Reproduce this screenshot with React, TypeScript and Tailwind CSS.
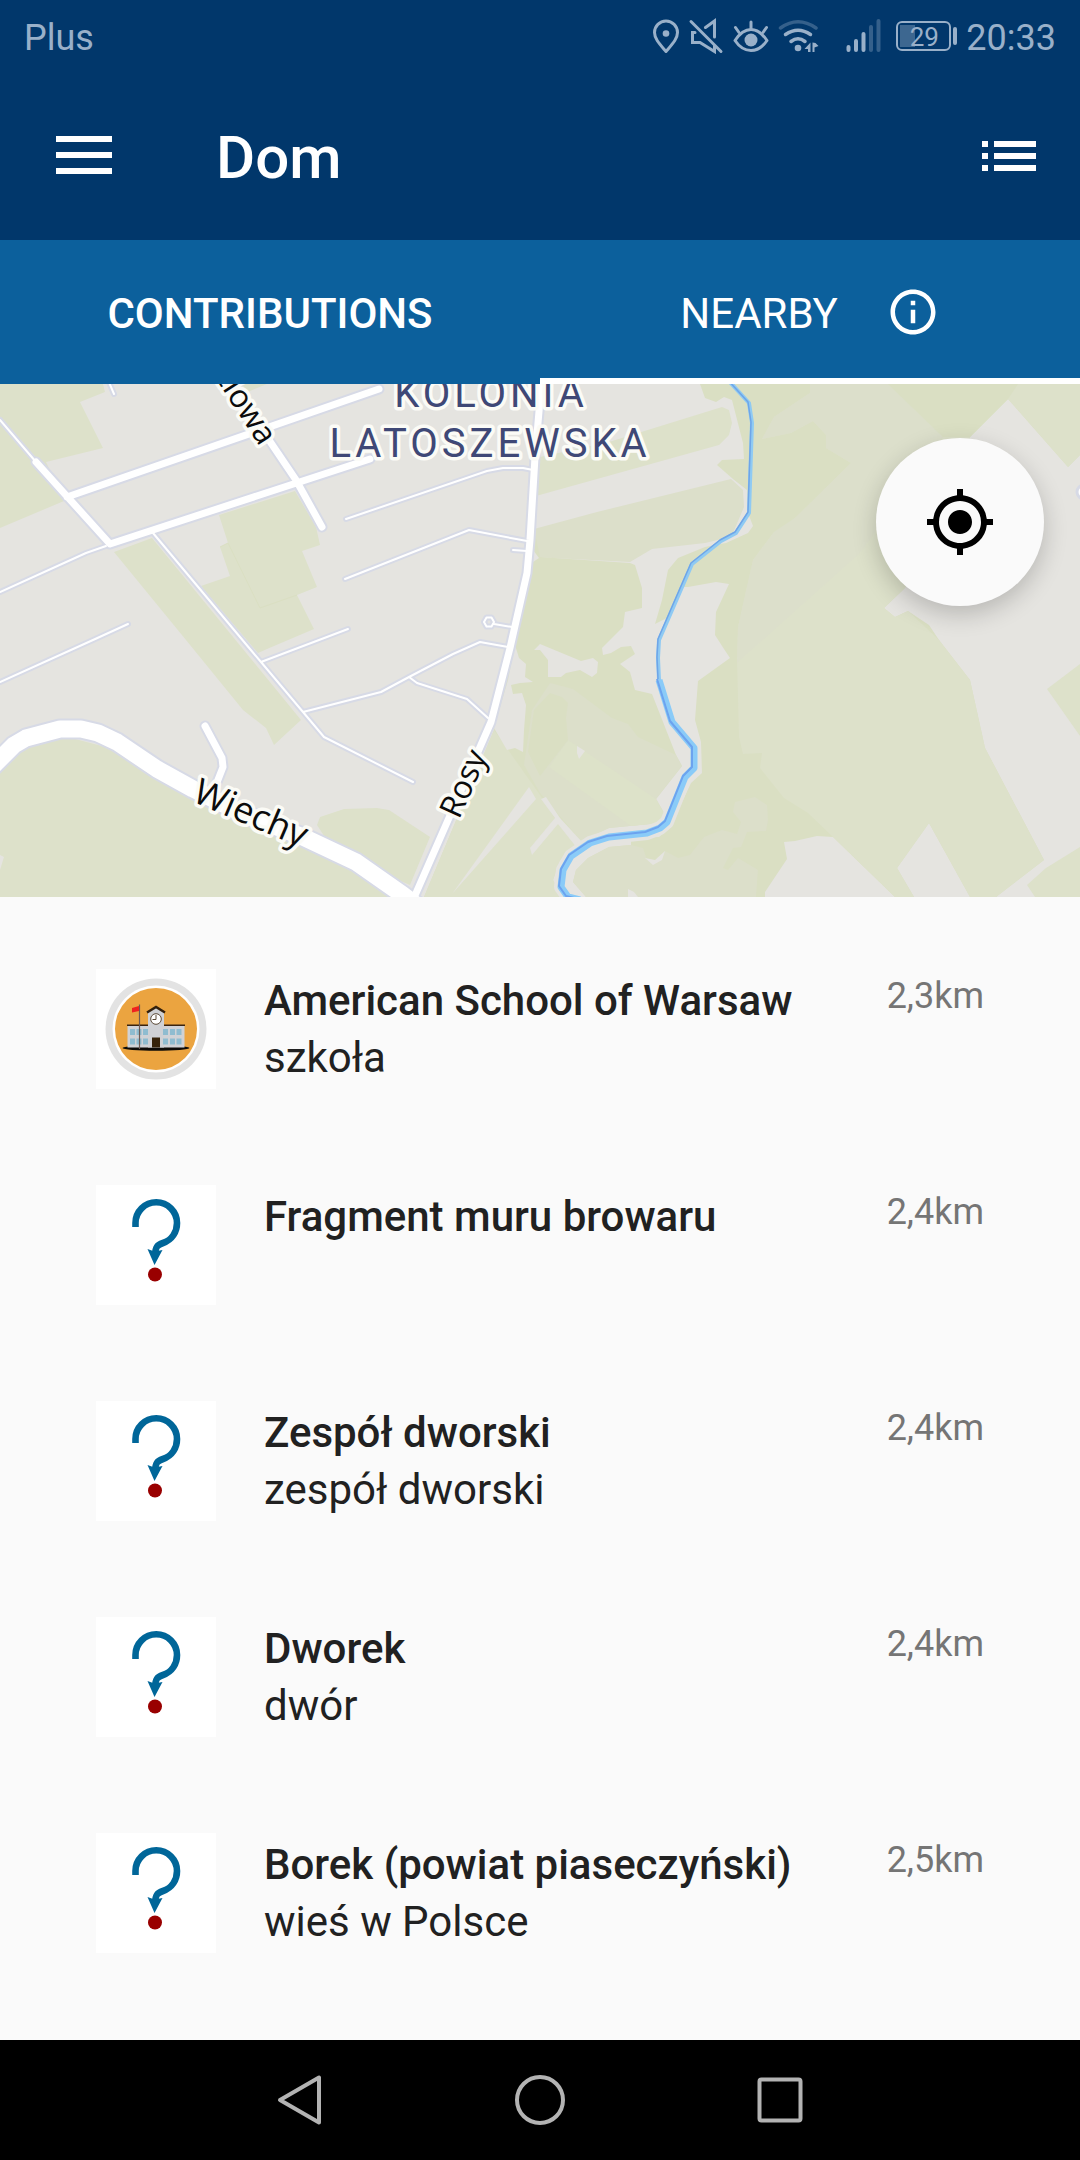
import React from 'react';

type Place = { name: string; kind?: string; distance: string; school?: boolean };

const places: Place[] = [
  { name: 'American School of Warsaw', kind: 'szkoła', distance: '2,3km', school: true },
  { name: 'Fragment muru browaru', distance: '2,4km' },
  { name: 'Zespół dworski', kind: 'zespół dworski', distance: '2,4km' },
  { name: 'Dworek', kind: 'dwór', distance: '2,4km' },
  { name: 'Borek (powiat piaseczyński)', kind: 'wieś w Polsce', distance: '2,5km' },
];

function StatusBar() {
  return (
    <div className="flex h-[72px] items-center justify-between px-6 text-4xl text-[#99b0c9]">
      <span className="pt-1">Plus</span>
      <div className="flex items-center">
        <div className="flex items-center gap-2">
          <svg width="28" height="36" viewBox="651 18 28 36" fill="none" stroke="currentColor" strokeWidth="3">
            <path d="M665 51.500C659 44.500 653.500 39 653.500 32.500a11.500 11.500 0 0 1 23 0C676.500 39 671 44.500 665 51.500Z" strokeLinejoin="round" />
            <circle cx="665" cy="33.500" r="3.300" fill="currentColor" stroke="none" />
          </svg>
          <svg width="36" height="36" viewBox="687 18 36 36" fill="none" stroke="currentColor" strokeWidth="3" strokeLinecap="round">
            <path d="M690 21.500 720 51.500" />
            <path d="M704.500 27.500 713.500 21V37M694 32.500h-2.500v10H699L713.500 51.500V46" />
          </svg>
          <svg width="38" height="36" viewBox="731 18 38 36" fill="none" stroke="currentColor" strokeWidth="3" strokeLinecap="round">
            <path d="M734 40.500C739 33 744 29.500 750 29.500S761 33 766 40.500C761 48 756 50.500 750 50.500S739 48 734 40.500Z" strokeLinejoin="round" />
            <circle cx="750" cy="40" r="6.500" fill="currentColor" stroke="none" />
            <path d="M750 22v6M734.500 27.500l3.500 5M765.500 27.500l-3.500 5" />
          </svg>
          <svg width="42" height="36" viewBox="777 18 42 36" fill="none" stroke="currentColor" strokeWidth="3.500" strokeLinecap="round">
            <path d="M779.500 28Q797 15.500 815 28" opacity=".35" />
            <path d="M784.500 34.500Q797 26 809.500 34.500M790 41.500Q797 36 804 41.500" />
            <circle cx="797" cy="48" r="3.300" fill="currentColor" stroke="none" />
            <path d="M809.500 42.500v9.500h-2.500v-3h-3.500zM811.500 42.500v9.500h2v-4.500l4-1.500-3-3z" fill="currentColor" stroke="none" />
          </svg>
        </div>
        <svg className="ml-6" width="38" height="36" viewBox="843 18 38 36" fill="none" stroke="currentColor" strokeWidth="4" strokeLinecap="round">
          <path d="M847.500 47v3M855 41v9M862.500 34v16" />
          <path d="M870 27v23M877.500 21v29" opacity=".35" />
        </svg>
        <div className="relative ml-3.5 mr-1.5 flex h-[30px] w-[64px] items-center">
          <svg className="absolute inset-0" width="64" height="30" viewBox="0 0 64 30" fill="none">
            <rect x="1" y="1" width="53" height="28" rx="5" stroke="currentColor" strokeWidth="2" />
            <rect x="4" y="4" width="15" height="22" fill="currentColor" opacity=".4" />
            <rect x="57" y="6" width="4" height="18" rx="2" fill="currentColor" />
          </svg>
          <span className="w-14 pt-0.5 text-center text-[26px] leading-none">29</span>
        </div>
        <span className="pt-1">20:33</span>
      </div>
    </div>
  );
}

function MapDrawing() {
  const lanes =
    'M108 380 114 394M0 420 36 462M106 546 86 553 0 592M128 624 93 640 0 682M153 533 250 649 261 662 303 712 324 737 413 782M348 629 261 662M303 712 381 692 409 677 453 654 480 642 508 647M409 677 417 683 467 699 488 718M346 519 487 471 503 468 523 468 533 470M345 579 469 530 527 541M513 550 527 551M512 627 494 624M494 622 491.500 617.500H486.500L484 622 486.500 626.500H491.500Z';
  const streets =
    'M36 462 110 544 370 459M67 497 379 389M218 370 269 440 296 480 322 527M541 375 540 400 535 457 530 540 527 573 510 648 491 722 413 900M205 726 222 758 223 767 214 790';
  const avenue =
    'M-6 765 14 745 26 738 60 729 81 729 98 733 117 742 157 769 193 789 241 813 303 837 356 862 403 895 420 908';
  const riverTop = 'M728 380 749 403 752 423 749 513 736 533 721 541 692 564 659 640 658 658 659 680';
  const riverLow =
    'M659 680 672 722 694 748 694 768 685 777 667 822 660 828 647 833 609 837 590 843 571 856 563 870 561 887 568 897 580 900';
  return (
    <svg
      className="block h-[513px] w-full"
      viewBox="0 384 1080 513"
      preserveAspectRatio="xMidYMid slice"
      role="img"
      aria-label="Map"
    >
      <rect y="384" width="1080" height="513" fill="#e5e4e0" />
      {/* meadows west of the main street */}
      <g fill="#dde1ca">
        <path d="M0 384H103L105 392 80 402 103 448 46 462 64 501 0 528Z" />
        <path d="M243 384H267L245 393Z" />
        <path d="M114 552 152 538 301 720 274 745 266 728 243 710 186 640Z" />
        <path d="M219 515 295 491 316 527 320 545 302 551 317 587 297 595 314 629 267 649 258 653 201 586 230 576 220 547 228 543Z" />
        <path d="M0 755 60 735 117 750 193 795 356 868 400 897H0Z" />
        <path d="M317 825 320 817 344 809 377 808 389 810 430 837 410 885 375 870 330 845Z" />
      </g>
      <path d="M220 547 228 543 260 608 297 595" fill="none" stroke="#dadfc2" />
      <path d="M0 855 4 857 0 870Z" fill="#e5e4e0" />
      {/* fields between the main street and the river */}
      <path d="M540 457 609 442 722 407 729 410 732 423 729 435 719 445 536 496Z" fill="#dde1ca" />
      <path d="M534 529 597 512 731 479 743 490 744 507 733 533 726 538 705 543 652 549 630 562 534 557Z" fill="#dcdfca" />
      <path d="M534 528 540 557 630 563 635 565 642 588 642 608 625 612 623 627 602 648 603 655 611 653 621 647 631 646 635 654 620 664 630 672 635 690 652 694 676 755 682 766 656 799 664 813 660 823 609 828 581 841 560 860 553 880 562 897H424L494 730 515 640 527 575Z" fill="#dadfc3" />
      <path d="M550 683 573 689 612 718 628 724 638 737 676 755 682 766 656 799 664 813 660 823 609 828 581 841 540 793 524 765 532 710Z" fill="#dcdfca" />
      <path d="M568 740 656 799 664 813 660 823 631 826 549 767Z" fill="#dde2c9" />
      <path d="M550 693 562 697 568 703 566 718 568 740 540 776 528 752 534 710Z" fill="#dadfc3" />
      <path d="M494 730 540 795 556 820 581 841 560 860 553 880 562 897H424Z" fill="#dde1ca" />
      <g fill="#e5e4e0">
        <path d="M534 650 540 644 581 661 593 658 598 662 597 673 592 677 580 670 566 673 561 677 548 677 548 660 540 650Z" />
        <path d="M515 645 519 658 526 664 525 677 533 682 520 683 511 685 513 694 522 693 526 705 524 730 523 752 515 748 507 750 494 728 508 680Z" />
        <path d="M529 787 452 894 536 799Z" />
        <path d="M533 550 539 558 533 562Z" />
        <path d="M577 746 585 751 579 759 577 753Z" />
        <path d="M541 799 546 797 560 818 583 843 577 848 558 824 532 855 530 848 555 818Z" />
      </g>
      {/* east bank */}
      <path d="M700 384 705 398 716 402 724 397 732 400 743 443 744 459 722 460 717 465 733 479 747 490 748 513 753 526 748 533 726 543 705 547 678 558 668 570 662 600 655 624 667 618 682 587 688 587 716 582 729 584 716 612 715 635 724 649 730 658 698 681 695 720 701 742 702 773 691 783 683 800 667 830 659 837 631 838 631 845 609 847 588 858 576 870 573 882 586 897H765V892L787 859 784 842 795 841 817 836 833 837 895 897H914L897 868 929 823 970 897H996L1044 860 985 748 970 680 939 640 929 625 908 611 895 617 884 608 905 588 970 437 1008 399 1068 467 1080 455V384Z" fill="#dadfc3" />
      <path d="M810 384V393L774 417 762 439 791 433 813 421 826 435V448L851 463 795 518 774 532 753 560 738 627 737 660 739 737 743 754 762 753 760 768 784 798 808 813 833 837 895 897H914L897 868 929 823 970 897H996L1044 860 985 748 970 680 939 640 908 611 895 617 884 608 905 588 970 437 1008 399 1068 467 1080 455V384Z" fill="#dde1ca" />
      <path d="M810 384V393L774 417 762 439 791 433 813 421 826 435V448L851 463 795 518 774 532 753 560 738 627 737 663 860 553 943 437 888 384Z" fill="#dcdfcb" />
      <path d="M888 384 943 437H970L1008 399 1018 384Z" fill="#dadfc3" />
      <path d="M631 845 643 848 647 860 655 864 665 851 678 858 690 855 704 837 722 830 737 834 741 822 733 812 735 802 755 797 767 805 768 820 766 831 747 832 741 847 733 848 723 868 728 870 738 858 758 870 756 897H586L573 882 576 870 588 858 609 847Z" fill="#dcdfca" />
      <g fill="#e5e4e0">
        <path d="M645 858 655 860 665 851 662 860 653 865Z" />
        <path d="M628 897V889L634 892 638 897Z" />
      </g>
      <g fill="#dde1ca">
        <path d="M1047 689 1080 664V736Z" />
        <path d="M1080 847 1046 868 1027 885 1035 897H1080Z" />
      </g>
      {/* river */}
      <g fill="none" strokeLinejoin="round">
        <path d={riverLow} stroke="#e5e4e0" strokeWidth="14" />
        <path d={riverTop} stroke="#8fcaf3" strokeWidth="4" />
        <path d={riverTop} stroke="#6ea5e8" strokeWidth="1.500" transform="translate(-1 -1)" />
        <path d={riverLow} stroke="#8acbf8" strokeWidth="7" />
        <path d={riverLow} stroke="#6ca3ef" strokeWidth="2" transform="translate(-2 -1)" />
      </g>
      {/* roads */}
      <g fill="none" strokeLinecap="round" strokeLinejoin="round">
        <g stroke="#d7dae6">
          <path d={lanes} strokeWidth="6" />
          <path d={streets} strokeWidth="11" />
          <path d={avenue} strokeWidth="21" />
        </g>
        <g stroke="#fff">
          <path d={lanes} strokeWidth="2" />
          <path d={streets} strokeWidth="7" />
          <path d={avenue} strokeWidth="17" />
        </g>
        <circle cx="1084" cy="492" r="7" fill="#fff" stroke="#d7dae6" strokeWidth="3" />
      </g>
      {/* labels */}
      <g className="[paint-order:stroke]" stroke="#fbfbf6" strokeWidth="7" strokeLinejoin="round">
        <g className="font-['Roboto',sans-serif] text-[40px] tracking-[4px]" fill="#3f4876" textAnchor="middle">
          <text x="491" y="407">KOLONIA</text>
          <text x="490" y="457">LATOSZEWSKA</text>
        </g>
        <g className="font-['Open_Sans',sans-serif] text-[32px]" fill="#0b0b0b">
          <text textAnchor="end" transform="translate(260 447) rotate(57)">ziowa</text>
          <text transform="translate(191 801) rotate(23)" className="text-[36px]">Wiechy</text>
          <text transform="translate(459 820) rotate(-66)">Rosy</text>
        </g>
      </g>
    </svg>
  );
}

function SchoolBadge() {
  return (
    <svg className="size-[120px] shrink-0 bg-white" viewBox="0 0 120 120" aria-hidden="true">
      <circle cx="60" cy="60" r="50.500" fill="#e3e3e3" />
      <circle cx="60" cy="60" r="43.500" fill="#fff" />
      <circle cx="60" cy="60" r="41" fill="#eba440" />
      <ellipse cx="60" cy="79" rx="33.500" ry="2.800" fill="#0d0b08" />
      <path d="M31.500 57H88.500V78.500H31.500Z" fill="#d0d2d6" />
      <path d="M31 55.500H89V57H31Z" fill="#3a2410" />
      <path d="M52 43 60 38.500 68 43V78.500H52Z" fill="#cfd1d5" />
      <path d="M51 43.500 60 38 69 43.500" fill="none" stroke="#33200c" strokeWidth="2.500" />
      <circle cx="60" cy="50" r="5.300" fill="#fff" stroke="#5a4a38" strokeWidth="1" />
      <path d="M60 46V50.500H56.500" fill="none" stroke="#5a4a38" strokeWidth="1" />
      <path d="M34 60h5v6h-5zM40.500 60h5v6h-5zM47 60h5v6h-5zM34 69.500h5v6h-5zM40.500 69.500h5v6h-5zM47 69.500h5v6h-5zM67 60h5v6h-5zM74 60h5v6h-5zM80.500 60h5v6h-5zM67 69.500h5v6h-5zM74 69.500h5v6h-5zM80.500 69.500h5v6h-5z" fill="#8fbcd0" />
      <path d="M56 68.500h8v10h-8z" fill="#35220a" />
      <path d="M43.500 35.500V80" stroke="#6b5a55" strokeWidth="1.200" />
      <path d="M36 39 43 37V42L36 43.500Z" fill="#f02020" />
    </svg>
  );
}

function UnknownBadge() {
  return (
    <svg className="size-[120px] shrink-0 bg-white" viewBox="0 0 120 120" aria-hidden="true">
      <path d="M39.500 42V38A20.700 20.700 0 0 1 81 38C81 47 76 55 67 58C61 60 59.500 62 59 70" fill="none" stroke="#069" strokeWidth="6.600" />
      <path d="M51.500 64 58.500 66.500 66.500 65 58.500 80Z" fill="#069" />
      <circle cx="59" cy="89.500" r="7" fill="#900" />
    </svg>
  );
}

export default function App() {
  return (
    <div className="flex min-h-screen flex-col bg-[#fafafa] font-['Roboto',sans-serif]">
      <header className="bg-[#01376b]">
        <StatusBar />
        <div className="flex h-[168px] items-center text-white">
          <button aria-label="Open menu" className="ml-14 flex h-14 w-14 items-center pb-0.5">
            <svg width="56" height="38" viewBox="0 0 56 38" fill="currentColor">
              <path d="M0 0h56v6H0zM0 16h56v6H0zM0 32h56v6H0z" />
            </svg>
          </button>
          <h1 className="ml-26 flex-1 pt-1 text-6xl font-medium">Dom</h1>
          <button aria-label="Show list" className="mr-11 flex h-14 items-center">
            <svg width="54" height="30" viewBox="0 0 54 30" fill="currentColor">
              <path d="M0 0h6v6H0zM12 0h42v6H12zM0 12h6v6H0zM12 12h42v6H12zM0 24h6v6H0zM12 24h42v6H12z" />
            </svg>
          </button>
        </div>
      </header>

      <nav className="grid h-36 grid-cols-2 bg-[#0c609c] text-[42px] text-white">
        <button className="flex items-center justify-center pt-0.5 font-medium">CONTRIBUTIONS</button>
        <button className="flex items-center justify-center gap-12 border-y-6 border-t-transparent border-b-white">
          <span className="pt-0.5">NEARBY</span>
          <svg width="54" height="54" viewBox="0 0 24 24" fill="currentColor" aria-hidden="true">
            <path d="M11 7h2v2h-2zm0 4h2v6h-2zm1-9C6.480 2 2 6.480 2 12s4.480 10 10 10 10-4.480 10-10S17.520 2 12 2zm0 18c-4.410 0-8-3.590-8-8s3.590-8 8-8 8 3.590 8 8-3.590 8-8 8z" />
          </svg>
        </button>
      </nav>

      <section className="relative">
        <MapDrawing />
        <button
          aria-label="My location"
          className="absolute top-[54px] right-9 flex size-[168px] items-center justify-center rounded-full bg-[#fafafa] text-black shadow-[0_8px_24px_rgba(0,0,0,0.2)]"
        >
          <svg width="72" height="72" viewBox="0 0 24 24" fill="currentColor">
            <path d="M12 8c-2.210 0-4 1.790-4 4s1.790 4 4 4 4-1.790 4-4-1.790-4-4-4zm8.940 3A8.994 8.994 0 0 0 13 3.060V1h-2v2.060A8.994 8.994 0 0 0 3.060 11H1v2h2.060A8.994 8.994 0 0 0 11 20.940V23h2v-2.060A8.994 8.994 0 0 0 20.940 13H23v-2h-2.060zM12 19c-3.870 0-7-3.130-7-7s3.130-7 7-7 7 3.130 7 7-3.130 7-7 7z" />
          </svg>
        </button>
      </section>

      <ul className="flex-1 pt-6">
        {places.map((place) => (
          <li key={place.name} className="flex gap-12 px-24 py-12">
            {place.school ? <SchoolBadge /> : <UnknownBadge />}
            <div className="flex-1 pt-[3px] text-[42px] leading-[57px] text-[#212121]">
              <h2 className="font-medium">{place.name}</h2>
              {place.kind && <p>{place.kind}</p>}
            </div>
            <span className="pt-[3px] text-4xl leading-[48px] text-[#757575]">{place.distance}</span>
          </li>
        ))}
      </ul>

      <footer className="flex h-[120px] items-center justify-center bg-black text-[#b3b3b3]">
        <button aria-label="Back" className="flex w-60 justify-center">
          <svg width="52" height="52" viewBox="0 0 52 52" fill="none" stroke="currentColor" strokeWidth="4" strokeLinejoin="round">
            <path d="M45 3.500V48.500L6 26Z" />
          </svg>
        </button>
        <button aria-label="Home" className="flex w-60 justify-center">
          <svg width="52" height="52" viewBox="0 0 52 52" fill="none" stroke="currentColor" strokeWidth="4">
            <circle cx="26" cy="26" r="23" />
          </svg>
        </button>
        <button aria-label="Recent apps" className="flex w-60 justify-center">
          <svg width="52" height="52" viewBox="0 0 52 52" fill="none" stroke="currentColor" strokeWidth="4">
            <rect x="5.500" y="5.500" width="41" height="41" rx="2" />
          </svg>
        </button>
      </footer>
    </div>
  );
}
